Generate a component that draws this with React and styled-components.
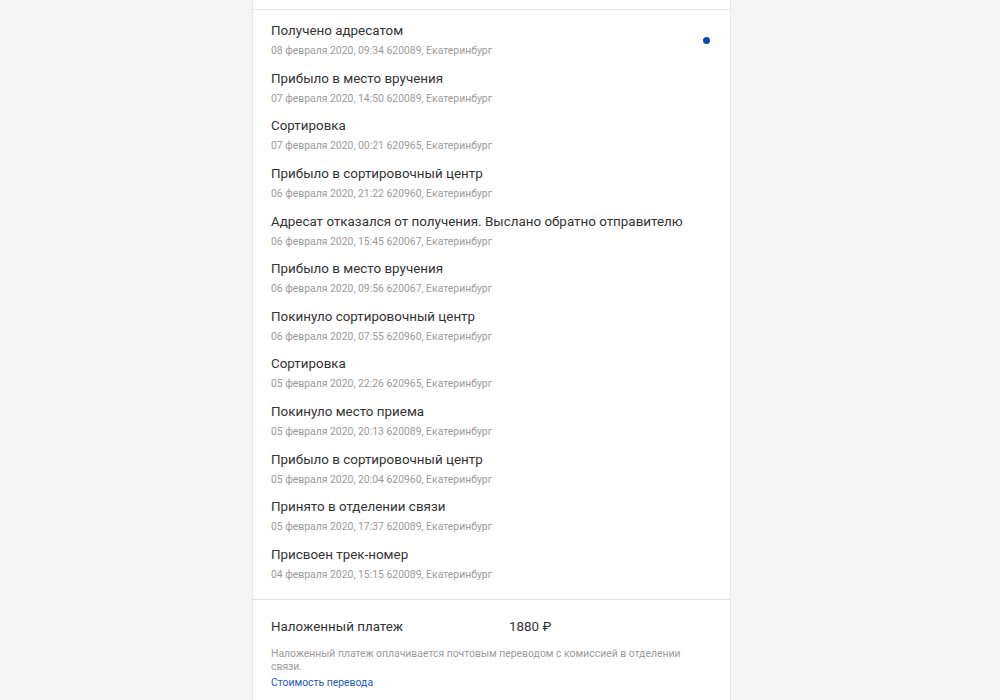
import React from 'react'
import styled, { createGlobalStyle } from 'styled-components'

const GlobalStyle = createGlobalStyle`
  html, body {
    margin: 0;
    background: #f5f5f5;
    font-family: Roboto, "Liberation Sans", Arial, sans-serif;
  }
`

const Page = styled.div`
  display: flex;
  padding-left: 252px;
  min-height: 700px;
`

const Card = styled.section`
  width: 477px;
  background: #fff;
  border-left: 1px solid #e6e6e6;
  border-right: 1px solid #e6e6e6;
  display: flex;
  flex-direction: column;
`

const TopStrip = styled.div`
  height: 9px;
  border-bottom: 1px solid #e8e8e8;
`

const List = styled.ul`
  list-style: none;
  margin: 0;
  padding: 11px 20px 16px 18px;
  display: flex;
  flex-direction: column;
  gap: 9.64px;
  border-bottom: 1px solid #e2e2e2;
`

const Row = styled.li`
  display: flex;
  align-items: center;
  justify-content: space-between;
`

const Info = styled.div`
  display: flex;
  flex-direction: column;
`

const Title = styled.div`
  font-size: 13.4px;
  line-height: 20px;
  color: #333;
`

const Meta = styled.div`
  font-size: 10.4px;
  line-height: 16px;
  margin-top: 2px;
  color: #9b9b9b;
`

const Dot = styled.span`
  width: 7px;
  height: 7px;
  border-radius: 50%;
  background: #0a4ca3;
  margin-top: 1px;
`

const Payment = styled.div`
  padding: 17px 18px 12px;
  display: flex;
  flex-direction: column;
`

const PaymentLine = styled.div`
  display: flex;
  font-size: 13.4px;
  line-height: 20px;
  color: #333;
  margin-bottom: 10px;
`

const Label = styled.span`
  width: 238px;
`

const Note = styled.p`
  margin: 0;
  max-width: 420px;
  font-size: 10.4px;
  line-height: 13px;
  color: #9b9b9b;
`

const Link = styled.a`
  font-size: 10.4px;
  line-height: 16px;
  color: #1d5bb3;
  text-decoration: none;
  margin-top: 2px;
`

const events = [
  ['Получено адресатом', '08 февраля 2020, 09:34 620089, Екатеринбург'],
  ['Прибыло в место вручения', '07 февраля 2020, 14:50 620089, Екатеринбург'],
  ['Сортировка', '07 февраля 2020, 00:21 620965, Екатеринбург'],
  ['Прибыло в сортировочный центр', '06 февраля 2020, 21:22 620960, Екатеринбург'],
  ['Адресат отказался от получения. Выслано обратно отправителю', '06 февраля 2020, 15:45 620067, Екатеринбург'],
  ['Прибыло в место вручения', '06 февраля 2020, 09:56 620067, Екатеринбург'],
  ['Покинуло сортировочный центр', '06 февраля 2020, 07:55 620960, Екатеринбург'],
  ['Сортировка', '05 февраля 2020, 22:26 620965, Екатеринбург'],
  ['Покинуло место приема', '05 февраля 2020, 20:13 620089, Екатеринбург'],
  ['Прибыло в сортировочный центр', '05 февраля 2020, 20:04 620960, Екатеринбург'],
  ['Принято в отделении связи', '05 февраля 2020, 17:37 620089, Екатеринбург'],
  ['Присвоен трек-номер', '04 февраля 2020, 15:15 620089, Екатеринбург'],
]

const App = () => {
  return (
    <Page>
      <GlobalStyle />
      <Card>
        <TopStrip />
        <List>
          {events.map(([title, meta], i) => (
            <Row key={i}>
              <Info>
                <Title>{title}</Title>
                <Meta>{meta}</Meta>
              </Info>
              {i === 0 && <Dot />}
            </Row>
          ))}
        </List>
        <Payment>
          <PaymentLine>
            <Label>Наложенный платеж</Label>
            <span>1880 ₽</span>
          </PaymentLine>
          <Note>
            Наложенный платеж оплачивается почтовым переводом с комиссией в отделении связи.
          </Note>
          <Link href="#">Стоимость перевода</Link>
        </Payment>
      </Card>
    </Page>
  )
}

export default App
